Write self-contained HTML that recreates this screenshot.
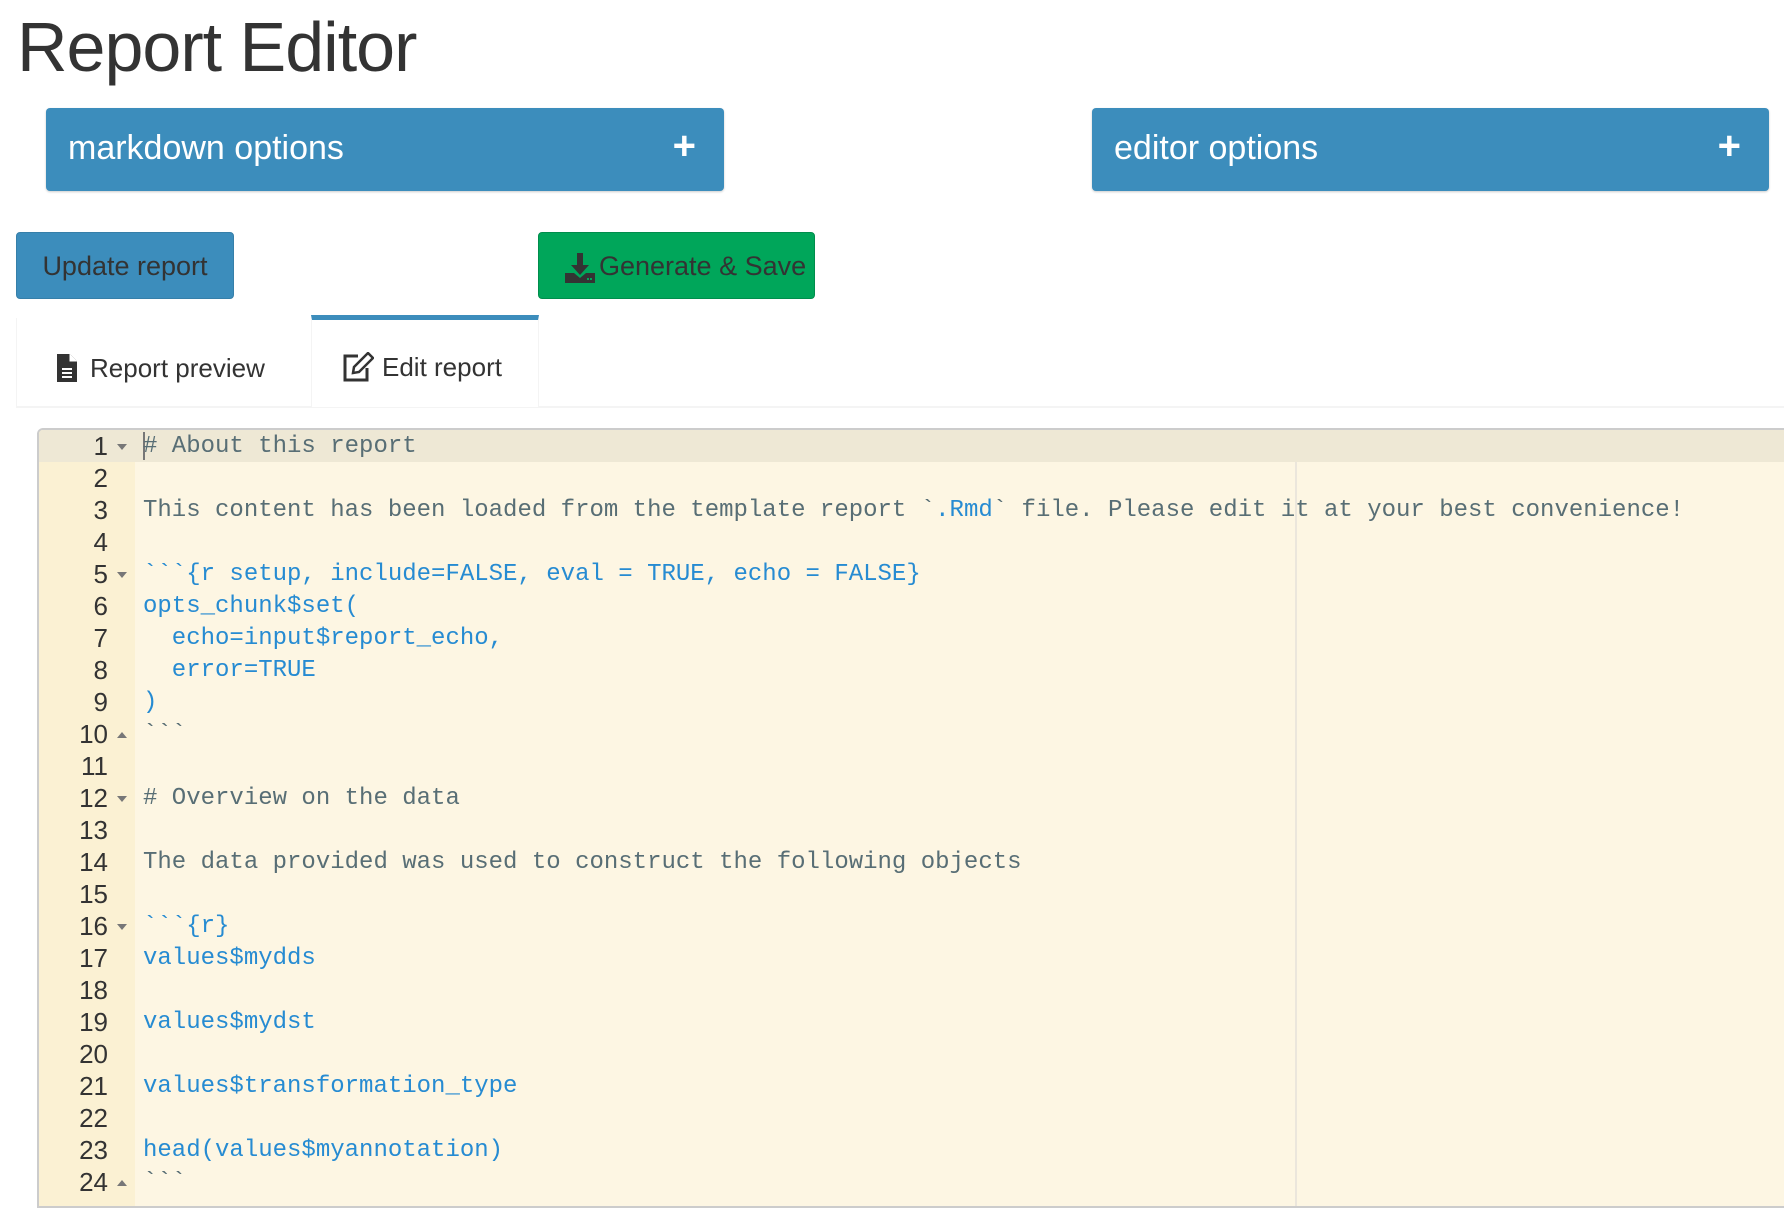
<!DOCTYPE html>
<html><head><meta charset="utf-8"><style>
*{margin:0;padding:0;box-sizing:border-box}
body{width:1784px;height:1200px;overflow:hidden;background:#fff;font-family:"Liberation Sans",sans-serif;position:relative}
.abs{position:absolute}
h1{position:absolute;left:17px;top:7px;font-size:70px;font-weight:400;color:#333;letter-spacing:-1px}
.panel{position:absolute;top:108px;height:83px;background:#3c8dbc;border-radius:4px;color:#fff;font-size:34px;box-shadow:0 1px 2px rgba(0,0,0,.2)}
.panel span{position:absolute;left:22px;top:21px}
.panel b{position:absolute;right:28px;top:16px;font-size:40px;font-weight:700}
.btn{position:absolute;top:232px;height:67px;border-radius:4px;font-size:27px;color:#333;line-height:66px}
.tabs{position:absolute;left:16px;top:318px;width:1768px;height:90px;border-bottom:2px solid #f4f4f4}
.tab{position:absolute;top:0;height:90px;font-size:26px;color:#333;line-height:100px}
.ed{position:absolute;left:37px;top:428px;width:1760px;height:780px;background:#fdf6e3;border:2px solid #ccc;border-radius:6px 0 0 0;overflow:hidden;font-family:"Liberation Mono",monospace;font-size:24px}
.gut{position:absolute;left:0;top:0;width:96px;height:100%;background:#fbf1d3}
.ln{position:absolute;left:0;width:96px;height:32px;line-height:32px;font-family:"Liberation Sans",sans-serif;font-size:26px}
.ln i{position:absolute;right:27px;font-style:normal;color:#333}
.ln s{position:absolute;right:8px;top:14px;width:0;height:0;border-left:5px solid transparent;border-right:5px solid transparent;border-top:6px solid #777;text-decoration:none}
.ln s.u{border-top:0;border-bottom:6px solid #777}
.cl{position:absolute;left:104px;height:32px;line-height:34px;white-space:pre;color:#586e75}
.b{color:#268bd2}
</style></head><body>
<h1>Report Editor</h1>
<div class="panel" style="left:46px;width:678px"><span>markdown options</span><b>+</b></div>
<div class="panel" style="left:1092px;width:677px"><span>editor options</span><b>+</b></div>
<div class="btn" style="left:16px;width:218px;background:#3c8dbc;border:1px solid #367fa9;text-align:center">Update report</div>
<div class="btn" style="left:538px;width:277px;background:#00a65a;border:1px solid #008d4c">
<svg class="abs" style="left:26px;top:20px" width="30" height="30" viewBox="0 0 30 30"><path d="M12 0h6v12h6l-9 10-9-10h6z" fill="#333"/><path d="M0 20h9l6 5 6-5h9v10H0z" fill="#333"/><rect x="22" y="25" width="2" height="2" fill="#00a65a"/><rect x="25" y="25" width="2" height="2" fill="#00a65a"/></svg>
<span style="position:absolute;left:60px">Generate &amp; Save</span></div>
<div class="tabs">
<div class="tab" style="left:0;width:295px;border-left:1px solid #f4f4f4">
<svg class="abs" style="left:40px;top:36px" width="20" height="28" viewBox="0 0 20 28"><path d="M0 0h13l7 7v21H0z" fill="#333"/><path d="M13 0v7h7" fill="#fff" stroke="#fff"/><rect x="5" y="14" width="10" height="2" fill="#fff"/><rect x="5" y="18" width="10" height="2" fill="#fff"/><rect x="5" y="22" width="10" height="2" fill="#fff"/></svg>
<span style="position:absolute;left:73px">Report preview</span></div>
<div class="tab" style="left:295px;width:228px;height:92px;background:#fff;border-top:5px solid #3c8dbc;border-left:1px solid #f4f4f4;border-right:1px solid #f4f4f4;top:-3px;line-height:94px">
<svg class="abs" style="left:30px;top:32px" width="32" height="30" viewBox="0 0 32 30"><path d="M16 4H3v24h22V16" fill="none" stroke="#333" stroke-width="3"/><path d="M11 21l1-6L26 1l5 5-14 14z" fill="none" stroke="#333" stroke-width="2.5"/></svg>
<span style="position:absolute;left:70px">Edit report</span></div>
</div>
<div class="ed">
<div class="gut"></div>
<div class="abs" style="left:0;top:0;width:100%;height:32px;background:#eee8d5"></div>
<div class="abs" style="left:1256px;top:32px;width:2px;height:100%;background:#ebe6dc"></div>
<div class="abs" style="left:104px;top:2px;width:2px;height:28px;background:#777"></div>
<div class="ln" style="top:0px"><i>1</i><s></s></div><div class="cl" style="top:0px"># About this report</div>
<div class="ln" style="top:32px"><i>2</i></div>
<div class="ln" style="top:64px"><i>3</i></div><div class="cl" style="top:64px">This content has been loaded from the template report &#96;<span class="b">.Rmd</span>&#96; file. Please edit it at your best convenience!</div>
<div class="ln" style="top:96px"><i>4</i></div>
<div class="ln" style="top:128px"><i>5</i><s></s></div><div class="cl b" style="top:128px">&#96;&#96;&#96;{r setup, include=FALSE, eval = TRUE, echo = FALSE}</div>
<div class="ln" style="top:160px"><i>6</i></div><div class="cl b" style="top:160px">opts_chunk$set(</div>
<div class="ln" style="top:192px"><i>7</i></div><div class="cl b" style="top:192px">  echo=input$report_echo,</div>
<div class="ln" style="top:224px"><i>8</i></div><div class="cl b" style="top:224px">  error=TRUE</div>
<div class="ln" style="top:256px"><i>9</i></div><div class="cl b" style="top:256px">)</div>
<div class="ln" style="top:288px"><i>10</i><s class="u"></s></div><div class="cl" style="top:288px">&#96;&#96;&#96;</div>
<div class="ln" style="top:320px"><i>11</i></div>
<div class="ln" style="top:352px"><i>12</i><s></s></div><div class="cl" style="top:352px"># Overview on the data</div>
<div class="ln" style="top:384px"><i>13</i></div>
<div class="ln" style="top:416px"><i>14</i></div><div class="cl" style="top:416px">The data provided was used to construct the following objects</div>
<div class="ln" style="top:448px"><i>15</i></div>
<div class="ln" style="top:480px"><i>16</i><s></s></div><div class="cl b" style="top:480px">&#96;&#96;&#96;{r}</div>
<div class="ln" style="top:512px"><i>17</i></div><div class="cl b" style="top:512px">values$mydds</div>
<div class="ln" style="top:544px"><i>18</i></div>
<div class="ln" style="top:576px"><i>19</i></div><div class="cl b" style="top:576px">values$mydst</div>
<div class="ln" style="top:608px"><i>20</i></div>
<div class="ln" style="top:640px"><i>21</i></div><div class="cl b" style="top:640px">values$transformation_type</div>
<div class="ln" style="top:672px"><i>22</i></div>
<div class="ln" style="top:704px"><i>23</i></div><div class="cl b" style="top:704px">head(values$myannotation)</div>
<div class="ln" style="top:736px"><i>24</i><s class="u"></s></div><div class="cl" style="top:736px">&#96;&#96;&#96;</div>
</div>
</body></html>
